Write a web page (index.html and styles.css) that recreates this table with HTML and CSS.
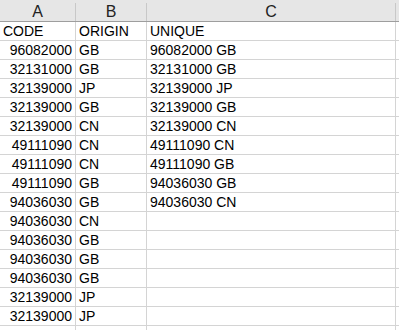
FILE: index.html
```html
<!DOCTYPE html>
<html>
<head>
<meta charset="utf-8">
<link rel="stylesheet" href="styles.css">
</head>
<body>
<div class="sheet">
  <div class="row head"><div class="h">A</div><div class="h">B</div><div class="h">C</div></div>
  <div class="row"><div class="c">CODE</div><div class="c">ORIGIN</div><div class="c">UNIQUE</div></div>
  <div class="row"><div class="c num">96082000</div><div class="c">GB</div><div class="c">96082000 GB</div></div>
  <div class="row"><div class="c num">32131000</div><div class="c">GB</div><div class="c">32131000 GB</div></div>
  <div class="row"><div class="c num">32139000</div><div class="c">JP</div><div class="c">32139000 JP</div></div>
  <div class="row"><div class="c num">32139000</div><div class="c">GB</div><div class="c">32139000 GB</div></div>
  <div class="row"><div class="c num">32139000</div><div class="c">CN</div><div class="c">32139000 CN</div></div>
  <div class="row"><div class="c num">49111090</div><div class="c">CN</div><div class="c">49111090 CN</div></div>
  <div class="row"><div class="c num">49111090</div><div class="c">CN</div><div class="c">49111090 GB</div></div>
  <div class="row"><div class="c num">49111090</div><div class="c">GB</div><div class="c">94036030 GB</div></div>
  <div class="row"><div class="c num">94036030</div><div class="c">GB</div><div class="c">94036030 CN</div></div>
  <div class="row"><div class="c num">94036030</div><div class="c">CN</div><div class="c"></div></div>
  <div class="row"><div class="c num">94036030</div><div class="c">GB</div><div class="c"></div></div>
  <div class="row"><div class="c num">94036030</div><div class="c">GB</div><div class="c"></div></div>
  <div class="row"><div class="c num">94036030</div><div class="c">GB</div><div class="c"></div></div>
  <div class="row"><div class="c num">32139000</div><div class="c">JP</div><div class="c"></div></div>
  <div class="row"><div class="c num">32139000</div><div class="c">JP</div><div class="c"></div></div>
  <div class="row"><div class="c"></div><div class="c"></div><div class="c"></div></div>
</div>
</body>
</html>
```
FILE: styles.css
```css
html, body {
  margin: 0;
  padding: 0;
  background: #ffffff;
  overflow: hidden;
}
.sheet {
  width: 399px;
  font-family: "Liberation Sans", Arial, sans-serif;
  font-size: 14px;
  color: #000;
}
.row {
  display: grid;
  grid-template-columns: 76px 71px 249px;
  height: 19px;
  border-bottom: 1px solid #d4d4d4;
  box-sizing: border-box;
}
.row.head {
  height: 22px;
  background: #e6e6e6;
  border-bottom: 1px solid #9e9e9e;
}
.h {
  text-align: center;
  font-size: 16px;
  color: #222;
  border-right: 1px solid #c8c8c8;
  box-sizing: border-box;
  margin-top: 3px;
  line-height: 18px;
}
.c {
  border-right: 1px solid #d4d4d4;
  box-sizing: border-box;
  line-height: 18px;
  padding: 0 3px;
  white-space: nowrap;
  overflow: hidden;
}
.c.num {
  text-align: right;
}
```
